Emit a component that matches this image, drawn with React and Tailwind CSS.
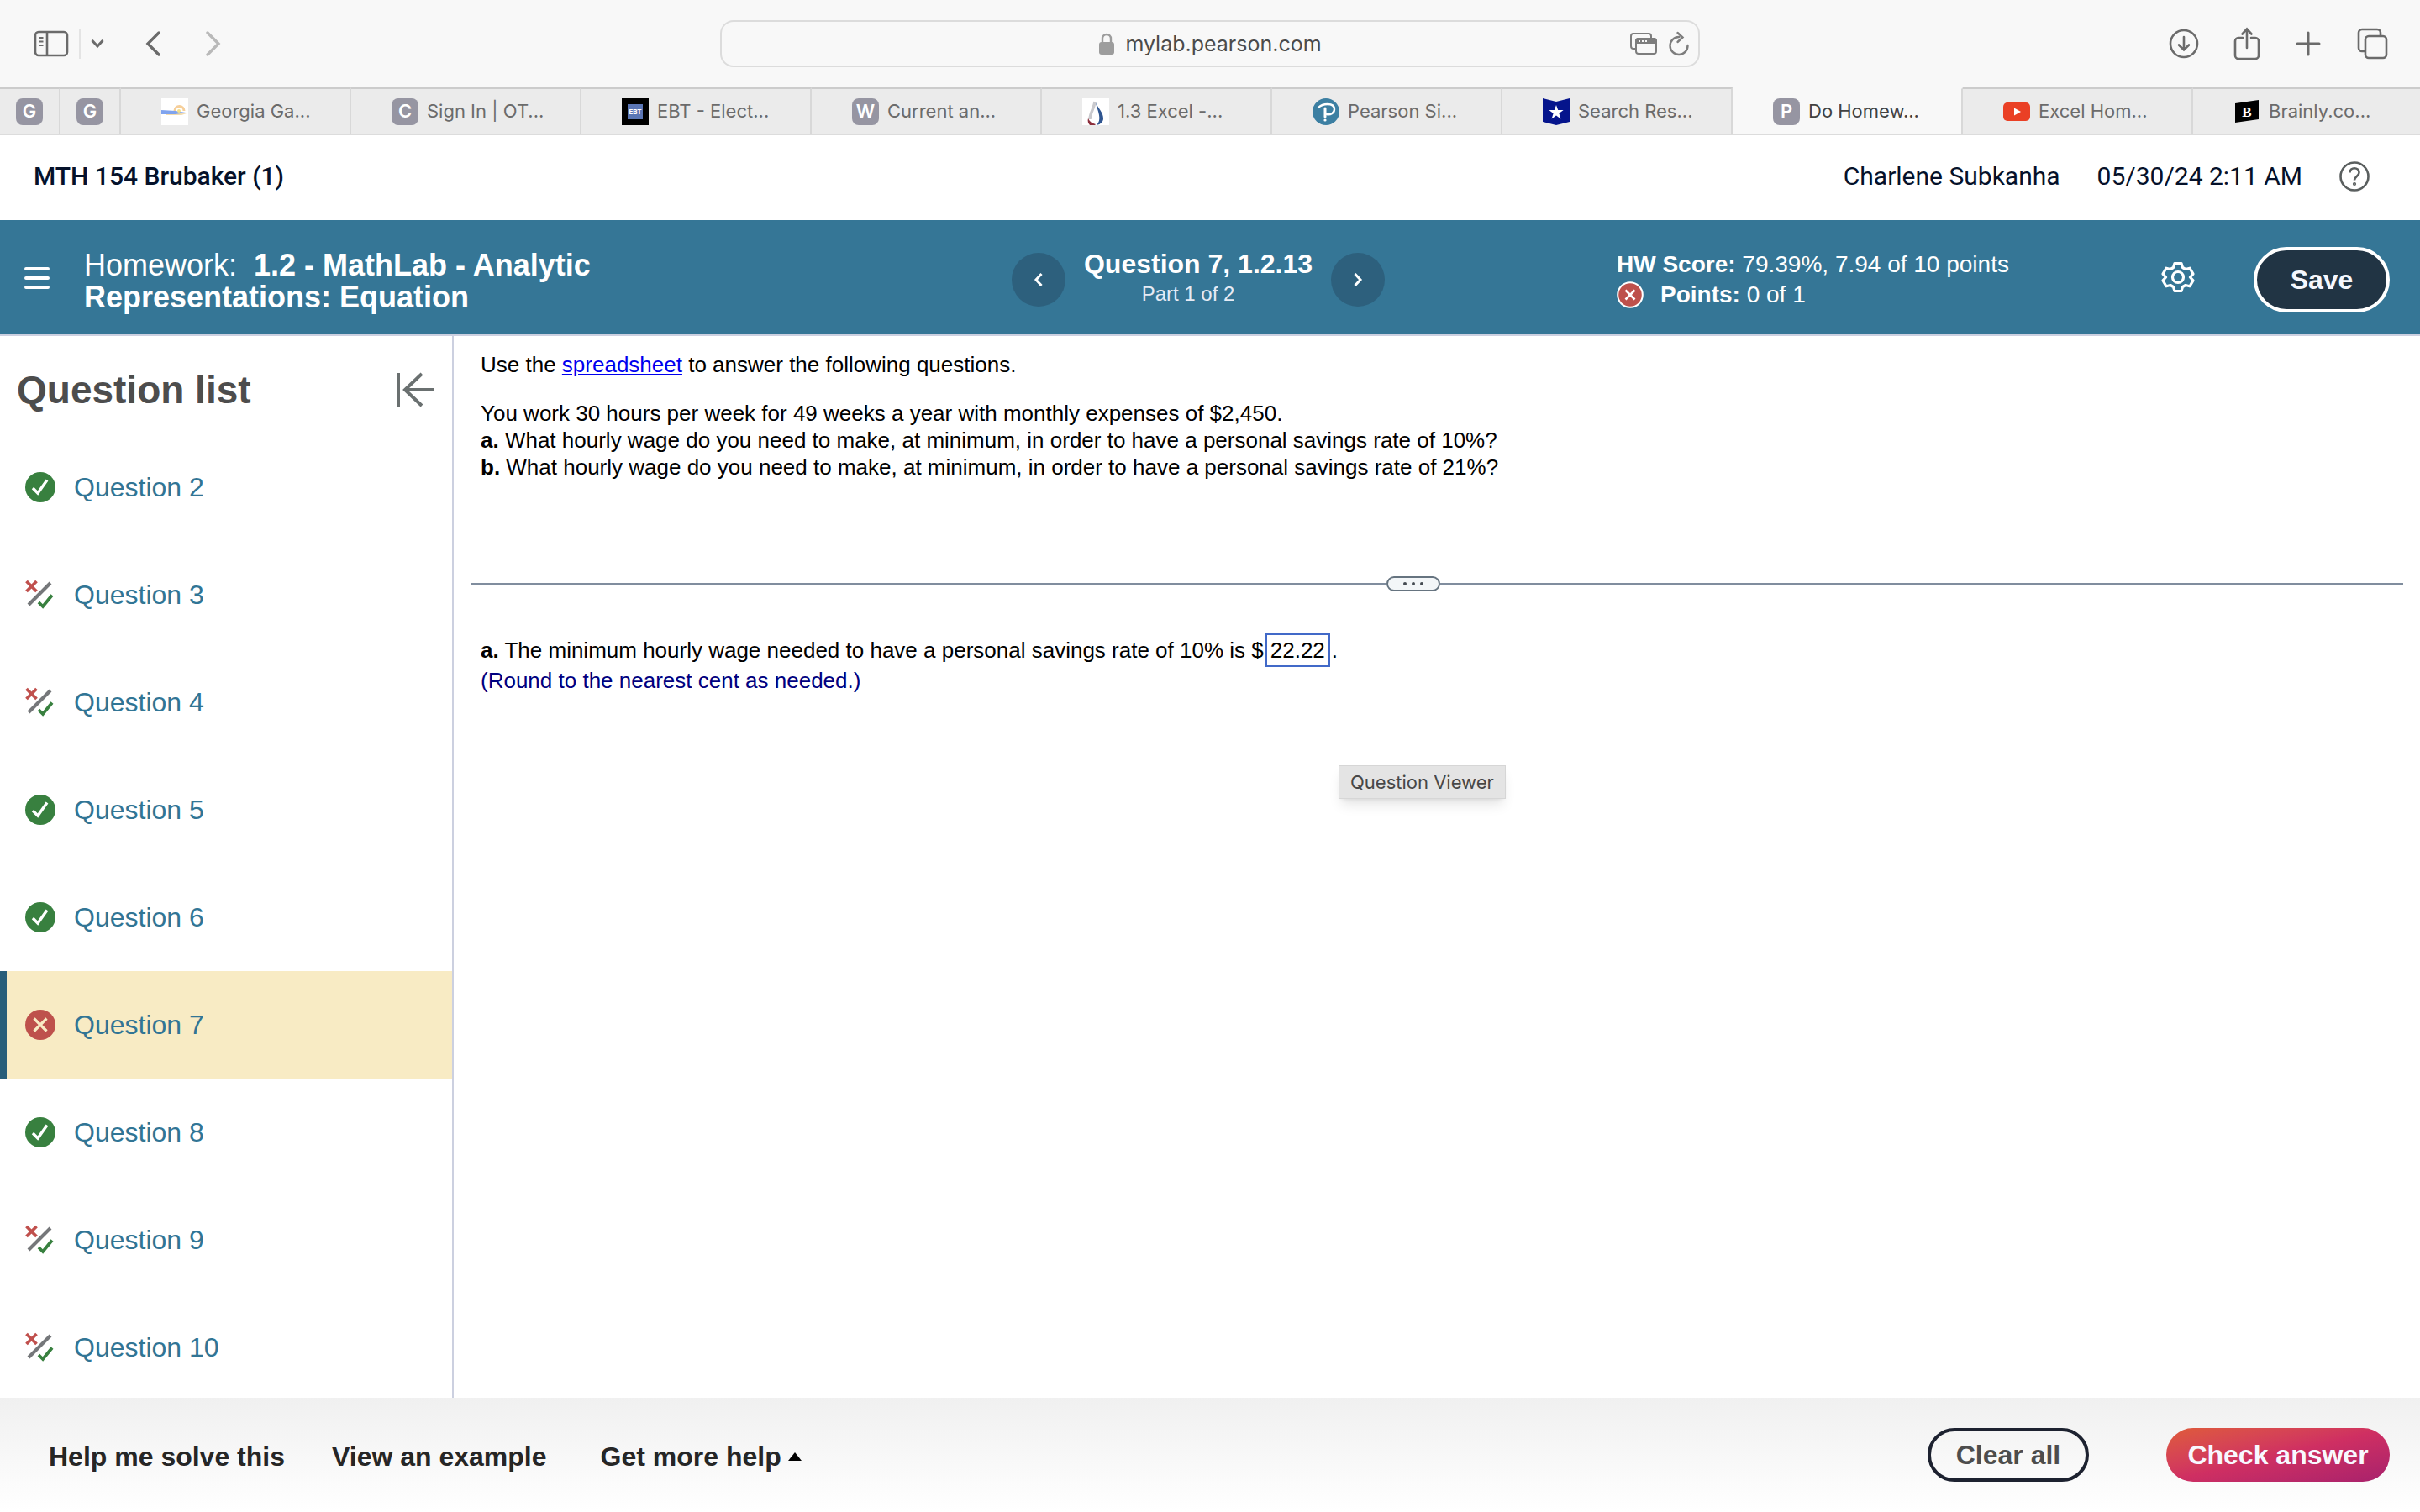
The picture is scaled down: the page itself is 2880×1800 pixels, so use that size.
import React, { useState } from "react";

const questions = [
  { number: 2, status: "correct" },
  { number: 3, status: "partial" },
  { number: 4, status: "partial" },
  { number: 5, status: "correct" },
  { number: 6, status: "correct" },
  { number: 7, status: "incorrect" },
  { number: 8, status: "correct" },
  { number: 9, status: "partial" },
  { number: 10, status: "partial" },
];

const LetterIcon = ({ letter }) => (
  <span className="flex h-8 w-8 shrink-0 items-center justify-center rounded-lg bg-[#9695a2] text-[22px] font-semibold text-white">
    {letter}
  </span>
);

const GeorgiaIcon = () => (
  <svg viewBox="0 0 32 32" className="h-8 w-8 shrink-0">
    <rect width="32" height="32" fill="#fff" />
    <path d="M16 15a5 5 0 0 1 11 0" fill="none" stroke="#f6cf9a" strokeWidth="3" />
    <path d="M6 18h24l-6 2H6z" fill="#f3dcae" />
    <path d="M0 14l17 1 12 2-12 2H0z" fill="#7fa3ee" />
    <circle cx="21" cy="15" r="2" fill="#f2e08a" />
  </svg>
);

const EbtIcon = () => (
  <span className="flex h-8 w-8 shrink-0 items-center justify-center bg-black">
    <span className="flex h-[18px] w-[18px] items-center justify-center bg-[#5b76b5] text-[8px] font-bold text-white">
      EBT
    </span>
  </span>
);

const DropIcon = () => (
  <svg viewBox="0 0 32 32" className="h-8 w-8 shrink-0">
    <rect width="32" height="32" fill="#fff" />
    <path d="M15 4C14 12 9 18 9 25" fill="none" stroke="#c9c9cd" strokeWidth="3.500" />
    <path d="M16 5c3 7 9 12 9 19 0 4-3 7-8 8 3-3 4-7 3-12-1-6-3-9-4-15z" fill="#2f5590" />
    <path d="M7 24c2 4 5 6 9 7l-1 1H9c-2-2-3-5-2-8z" fill="#8c2f3c" />
  </svg>
);

const PearsonIcon = () => (
  <svg viewBox="0 0 32 32" className="h-8 w-8 shrink-0">
    <ellipse cx="16" cy="16" rx="16" ry="16" fill="#3c7fa2" />
    <path
      d="M7 11c3-3 7-4 11-4 5 0 8 2 8 6 0 5-5 7-9 6"
      fill="none"
      stroke="#fff"
      strokeWidth="2.4"
      strokeLinecap="round"
    />
    <path d="M15 12v10" stroke="#fff" strokeWidth="3" strokeLinecap="round" />
    <circle cx="15" cy="26" r="1.6" fill="#fff" />
  </svg>
);

const BadgeIcon = () => (
  <svg viewBox="0 0 32 32" className="h-8 w-8 shrink-0">
    <path d="M0 0l16 4L32 0v28l-16 4-16-4z" fill="#05148c" />
    <path d="M16 8l2.200 6h6.400l-5.200 4 2 6.400L16 20.600 10.600 24.400l2-6.400-5.200-4h6.400z" fill="#fff" />
  </svg>
);

const VideoIcon = () => (
  <svg viewBox="0 0 32 32" className="h-8 w-8 shrink-0">
    <rect y="5" width="32" height="22" rx="5" fill="#ea4025" />
    <path d="M13 11.500v9l8-4.500z" fill="#fff" />
  </svg>
);

const BrainlyIcon = () => (
  <svg viewBox="0 0 32 32" className="h-8 w-8 shrink-0">
    <path d="M2 6l28-4v23L2 29z" fill="#000" />
    <text x="16" y="22" textAnchor="middle" fontSize="17" fontWeight="700" fill="#fff" fontFamily="Liberation Serif, serif">
      B
    </text>
  </svg>
);

const tabs = [
  { title: "Georgia Ga...", icon: <GeorgiaIcon /> },
  { title: "Sign In | OT...", icon: <LetterIcon letter="C" /> },
  { title: "EBT - Elect...", icon: <EbtIcon /> },
  { title: "Current an...", icon: <LetterIcon letter="W" /> },
  { title: "1.3 Excel -...", icon: <DropIcon /> },
  { title: "Pearson Si...", icon: <PearsonIcon /> },
  { title: "Search Res...", icon: <BadgeIcon /> },
  { title: "Do Homew...", icon: <LetterIcon letter="P" />, active: true },
  { title: "Excel Hom...", icon: <VideoIcon /> },
  { title: "Brainly.co...", icon: <BrainlyIcon /> },
];

const StatusIcon = ({ status }) => {
  if (status === "correct") {
    return (
      <svg viewBox="0 0 36 36" className="h-9 w-9">
        <circle cx="18" cy="18" r="18" fill="#38803f" />
        <path d="M9 19l6 6L26 9.500" fill="none" stroke="#fff" strokeWidth="3.400" />
      </svg>
    );
  }
  if (status === "incorrect") {
    return (
      <svg viewBox="0 0 36 36" className="h-9 w-9">
        <circle cx="18" cy="18" r="18" fill="#be514c" />
        <path d="M10.500 10.500l15 15M25.500 10.500l-15 15" stroke="#f8ebc4" strokeWidth="3.200" />
      </svg>
    );
  }
  return (
    <svg viewBox="0 0 36 36" className="h-9 w-9" fill="none">
      <path d="M1.500 2l12 12M13.500 2l-12 12" stroke="#c0504d" strokeWidth="3.800" />
      <path d="M4 30L30 4" stroke="#75777a" strokeWidth="4" />
      <path d="M16 27l5 5L32 18.500" stroke="#38803f" strokeWidth="3.800" />
    </svg>
  );
};

const BrowserToolbar = () => (
  <div className="grid h-[104px] grid-cols-[1fr_40.5%_1fr] items-center bg-[#f8f8f8] text-[#6b6b6b]">
    <div className="flex items-center pl-10">
      <button aria-label="Sidebar">
        <svg viewBox="0 0 42 32" className="h-8 w-[42px]" fill="none" stroke="currentColor">
          <rect x="2" y="2" width="38" height="28" rx="4" strokeWidth="2.600" />
          <path d="M16 2v28" strokeWidth="2.600" />
          <path d="M6.500 9h5M6.500 13.500h5M6.500 18h5" strokeWidth="2" />
        </svg>
      </button>
      <span className="ml-3 h-9 w-0.5 bg-[#e4e4e4]" />
      <button aria-label="Tab groups" className="ml-3">
        <svg viewBox="0 0 16 12" className="h-3 w-4" fill="none" stroke="currentColor" strokeWidth="3">
          <path d="M1.500 2L8 9l6.500-7" />
        </svg>
      </button>
      <button aria-label="Back" className="ml-12">
        <svg viewBox="0 0 20 32" className="h-8 w-5" fill="none" stroke="currentColor" strokeWidth="3.400" strokeLinecap="round">
          <path d="M17 3L4 16l13 13" />
        </svg>
      </button>
      <button aria-label="Forward" className="ml-[52px] text-[#b9b9b9]">
        <svg viewBox="0 0 20 32" className="h-8 w-5" fill="none" stroke="currentColor" strokeWidth="3.400" strokeLinecap="round">
          <path d="M3 3l13 13L3 29" />
        </svg>
      </button>
    </div>

    <div className="grid h-14 grid-cols-[1fr_auto_1fr] items-center rounded-2xl border-2 border-[#dcdcdc]">
      <span />
      <div className="flex items-center gap-3">
        <svg viewBox="0 0 20 28" className="h-7 w-5">
          <path d="M5 13V8a5 5 0 0 1 10 0v5" fill="none" stroke="#9d9d9d" strokeWidth="2.400" />
          <rect x="1" y="12" width="18" height="15" rx="3" fill="#9d9d9d" />
        </svg>
        <span className="text-[25px] leading-8 text-[#4b4b4b]">mylab.pearson.com</span>
      </div>
      <div className="flex items-center justify-end gap-3 pr-2.5 text-[#7d7d7d]">
        <svg viewBox="0 0 34 28" className="h-7 w-[34px]" fill="none" stroke="currentColor" strokeWidth="2">
          <path d="M8 20H5a3 3 0 0 1-3-3V5a3 3 0 0 1 3-3h18a3 3 0 0 1 3 3v3" />
          <rect x="8" y="8" width="24" height="18" rx="3" />
          <path d="M8 13v-2a3 3 0 0 1 3-3h18a3 3 0 0 1 3 3v2z" fill="currentColor" />
          <path d="M11 11h2M15 11h2M19 11h2" stroke="#f8f8f8" />
        </svg>
        <button aria-label="Reload">
          <svg viewBox="0 0 26 30" className="h-[30px] w-[26px]" fill="none" stroke="currentColor" strokeWidth="2.400" strokeLinecap="round">
            <path d="M13.500 7A10.500 10.500 0 1 0 23.500 17" />
            <path d="M11.500 2l6 5.500-6 5.500" />
          </svg>
        </button>
      </div>
    </div>

    <div className="flex items-center justify-end gap-[41px] pr-[38px]">
      <button aria-label="Downloads">
        <svg viewBox="0 0 36 36" className="h-9 w-9" fill="none" stroke="currentColor" strokeWidth="2.600" strokeLinecap="round">
          <circle cx="18" cy="18" r="16" />
          <path d="M18 10v15M12 19.500l6 6 6-6" />
        </svg>
      </button>
      <button aria-label="Share">
        <svg viewBox="0 0 32 40" className="h-10 w-8" fill="none" stroke="currentColor" strokeWidth="2.600" strokeLinecap="round">
          <path d="M11 13H6a4 4 0 0 0-4 4v17a4 4 0 0 0 4 4h20a4 4 0 0 0 4-4V17a4 4 0 0 0-4-4h-5" />
          <path d="M16 25V3M10.500 8.500L16 2.500l5.500 6" />
        </svg>
      </button>
      <button aria-label="New tab">
        <svg viewBox="0 0 32 32" className="h-8 w-8" fill="none" stroke="currentColor" strokeWidth="3" strokeLinecap="round">
          <path d="M16 3v26M3 16h26" />
        </svg>
      </button>
      <button aria-label="Tab overview">
        <svg viewBox="0 0 38 38" className="h-[38px] w-[38px]" fill="none" stroke="currentColor" strokeWidth="2.600">
          <path d="M10 28H7a4 4 0 0 1-4-4V6a4 4 0 0 1 4-4h18a4 4 0 0 1 4 4v3" />
          <rect x="11" y="10" width="25" height="26" rx="4" />
        </svg>
      </button>
    </div>
  </div>
);

const TabBar = () => (
  <div className="-mr-1 flex h-[57px] border-b-2 border-[#dcdcdc] bg-[#ebebeb] text-[22px] text-[#6b6b6b]">
    {[1, 2].map((pin) => (
      <div
        key={pin}
        className="flex w-[72px] items-center justify-center border-t-2 border-r-2 border-t-[#cccccc] border-r-[#d8d8d8]"
      >
        <LetterIcon letter="G" />
      </div>
    ))}
    {tabs.map((tab) => (
      <div
        key={tab.title}
        className={
          tab.active
            ? "flex min-w-0 flex-1 items-center gap-2.5 border-t-2 border-r-2 border-t-[#f8f8f8] border-r-[#d8d8d8] bg-[#f8f8f8] pl-12 text-[#414141]"
            : "flex min-w-0 flex-1 items-center gap-2.5 border-t-2 border-r-2 border-t-[#cccccc] border-r-[#d8d8d8] pl-12"
        }
      >
        {tab.icon}
        <span className="whitespace-nowrap">{tab.title}</span>
      </div>
    ))}
  </div>
);

const CourseHeader = () => (
  <header className="flex h-[101px] items-center justify-between bg-white pr-[60px] pb-1 pl-10 font-['Roboto',sans-serif] text-[30px] text-[#05112a]">
    <h1 className="font-medium">MTH 154 Brubaker (1)</h1>
    <div className="flex items-center gap-11">
      <span>Charlene Subkanha</span>
      <span>05/30/24 2:11 AM</span>
      <button aria-label="Help">
        <svg viewBox="0 0 36 36" className="h-9 w-9" fill="none" stroke="#5a5f5f" strokeWidth="2.600">
          <circle cx="18" cy="18" r="16.500" />
          <path d="M12.500 13.500c0-7 11-7 11 0 0 4-5.500 4.500-5.500 9" />
          <circle cx="18" cy="27" r="0.800" />
        </svg>
      </button>
    </div>
  </header>
);

const AssignmentBar = () => (
  <div className="grid h-[138px] grid-cols-[1204fr_444fr_1232fr] items-center border-b-2 border-[#ccd0e0] bg-[#357696] pt-1.5 text-white">
    <div className="flex items-center gap-10 pl-7">
      <button aria-label="Menu" className="pb-1">
        <svg viewBox="0 0 32 28" className="h-7 w-8" stroke="currentColor" strokeWidth="4" strokeLinecap="round">
          <path d="M3 3h26M3 14h26M3 25h26" />
        </svg>
      </button>
      <h2 className="max-w-[660px] pt-1 text-[36px] leading-[38px] font-bold">
        <span className="font-normal">Homework:</span>&nbsp; 1.2 - MathLab - Analytic Representations: Equation
      </h2>
    </div>

    <div className="flex items-center justify-between">
      <button aria-label="Previous question" className="flex h-16 w-16 items-center justify-center rounded-full bg-[#2d607d]">
        <svg viewBox="0 0 12 18" className="h-[18px] w-3" fill="none" stroke="currentColor" strokeWidth="3">
          <path d="M9.500 2L3 9l6.500 7" />
        </svg>
      </button>
      <div className="pb-1 text-center">
        <p className="text-[32px] leading-9 font-bold">Question 7, 1.2.13</p>
        <p className="pt-0.5 pr-6 text-2xl text-[#e6ebf5]">Part 1 of 2</p>
      </div>
      <button aria-label="Next question" className="flex h-16 w-16 items-center justify-center rounded-full bg-[#2d607d]">
        <svg viewBox="0 0 12 18" className="h-[18px] w-3" fill="none" stroke="currentColor" strokeWidth="3">
          <path d="M2.500 2L9 9l-6.500 7" />
        </svg>
      </button>
    </div>

    <div className="flex items-center pr-9">
      <div className="flex-1 pl-[276px] text-[28px] leading-9 whitespace-nowrap">
        <p>
          <b>HW Score:</b> 79.39%, 7.94 of 10 points
        </p>
        <p className="flex items-center">
          <svg viewBox="0 0 32 32" className="mr-5 h-8 w-8">
            <circle cx="16" cy="16" r="14.800" fill="#be514c" stroke="#fff" strokeWidth="2" />
            <path d="M10.500 10.500l11 11M21.500 10.500l-11 11" stroke="#fff" strokeWidth="2.600" />
          </svg>
          <span>
            <b>Points:</b> 0 of 1
          </span>
        </p>
      </div>
      <button aria-label="Settings" className="mr-[70px] pb-1.5">
        <svg viewBox="0 0 40 40" className="h-10 w-10" fill="none" stroke="currentColor" strokeWidth="3.200" strokeLinejoin="round">
          <path d="M16 3.500h8l1.500 5 3.500 2 5-1.300 4 6.900-3.600 3.900 3.600 3.900-4 6.900-5-1.300-3.500 2-1.500 5h-8l-1.500-5-3.500-2-5 1.300-4-6.900L5.600 20 2 16.100l4-6.900 5 1.300 3.500-2z" />
          <circle cx="20" cy="20" r="6.500" />
        </svg>
      </button>
      <button className="h-[78px] w-[162px] rounded-full border-4 border-white bg-[#213444] text-[32px] font-bold text-[#f5f7fd]">
        Save
      </button>
    </div>
  </div>
);

const QuestionList = () => (
  <aside className="w-[540px] shrink-0 border-r-2 border-[#ccd0e0]">
    <div className="flex h-[116px] items-center justify-between pt-3 pr-5 pl-5">
      <h2 className="text-[46px] leading-none font-bold text-[#4d4d4d]">Question list</h2>
      <button aria-label="Collapse question list">
        <svg viewBox="0 0 48 44" className="h-11 w-12" fill="none" stroke="#6a7070" strokeWidth="4">
          <path d="M4 2v40M46 22H12M32 3L12 22l20 19" />
        </svg>
      </button>
    </div>
    <nav>
      {questions.map((question) => (
        <a
          key={question.number}
          href="#"
          className={
            question.number === 7
              ? "flex h-32 items-center gap-[22px] border-l-8 border-[#285e7a] bg-[#f8ebc4] pl-[22px] text-[32px] text-[#317595]"
              : "flex h-32 items-center gap-[22px] border-l-8 border-transparent pl-[22px] text-[32px] text-[#317595]"
          }
        >
          <StatusIcon status={question.status} />
          Question {question.number}
        </a>
      ))}
    </nav>
  </aside>
);

const QuestionViewer = () => {
  const [answer, setAnswer] = useState("22.22");

  return (
    <main className="relative flex-1 pr-5 pl-5 text-[26px] leading-8 text-black">
      <div className="h-[286px] pt-[18px] pl-3">
        <p>
          Use the{" "}
          <a href="#" className="text-[#0000ee] underline">
            spreadsheet
          </a>{" "}
          to answer the following questions.
        </p>
        <p className="mt-[26px]">You work 30 hours per week for 49 weeks a year with monthly expenses of $2,450.</p>
        <p>
          <b>a.</b> What hourly wage do you need to make, at minimum, in order to have a personal savings rate of 10%?
        </p>
        <p>
          <b>b.</b> What hourly wage do you need to make, at minimum, in order to have a personal savings rate of 21%?
        </p>
      </div>

      {/* Resize handle between the question and the answer */}
      <div className="flex items-center">
        <span className="h-0.5 flex-[1090] bg-[#808d9e]" />
        <button
          aria-label="Resize panes"
          className="flex h-[18px] w-16 items-center justify-center gap-1.5 rounded-full border-2 border-[#667480] bg-[#f3f6f8]"
        >
          <span className="h-1 w-1 rounded-full bg-[#454b52]" />
          <span className="h-1 w-1 rounded-full bg-[#454b52]" />
          <span className="h-1 w-1 rounded-full bg-[#454b52]" />
        </button>
        <span className="h-0.5 flex-[1146] bg-[#808d9e]" />
      </div>

      <div className="pt-[50px] pl-3">
        <div className="flex h-10 items-center">
          <label htmlFor="answer">
            <b>a.</b> The minimum hourly wage needed to have a personal savings rate of 10% is $
          </label>
          <input
            id="answer"
            type="text"
            value={answer}
            onChange={(e) => setAnswer(e.target.value)}
            className="mx-0.5 h-10 w-[77px] border-2 border-[#4169c8] bg-white px-1 outline-none"
          />
          .
        </div>
        <p className="text-[#000080]">(Round to the nearest cent as needed.)</p>
      </div>

      <div
        role="tooltip"
        className="absolute top-[511px] left-[1053px] border border-[#d6d6d6] bg-[#e4e4e4] px-[13px] py-[3px] font-['Inter',sans-serif] text-[22px] text-[#474747] shadow-lg"
      >
        Question Viewer
      </div>
    </main>
  );
};

const Footer = () => (
  <footer className="flex h-[136px] shrink-0 items-center justify-between bg-linear-to-b from-[#f0f0f0] to-white pr-9 pl-[58px] text-[32px] font-bold text-[#262626]">
    <div className="flex gap-14 pt-1">
      <button>Help me solve this</button>
      <button>View an example</button>
      <button className="flex items-center gap-2 pl-2">
        Get more help
        <svg viewBox="0 0 16 10" className="h-2.5 w-4">
          <path d="M0 10L8 0l8 10z" fill="#000" />
        </svg>
      </button>
    </div>
    <div className="flex gap-[92px]">
      <button className="h-16 w-48 rounded-full border-4 border-[#1d2230] text-[#4d4d4d]">Clear all</button>
      <button className="h-16 w-[266px] rounded-full bg-linear-to-br from-[#df5b38] via-[#cf2f62] to-[#a8216c] text-[#f8f8ff]">
        Check answer
      </button>
    </div>
  </footer>
);

const App = () => {
  return (
    <div className="flex h-screen flex-col overflow-hidden bg-white font-['Liberation_Sans',Arial,sans-serif]">
      <div className="shrink-0 font-['Inter',sans-serif]">
        <BrowserToolbar />
        <TabBar />
      </div>
      <div className="shrink-0">
        <CourseHeader />
        <AssignmentBar />
      </div>
      <div className="flex min-h-0 flex-1 overflow-hidden">
        <QuestionList />
        <QuestionViewer />
      </div>
      <Footer />
    </div>
  );
};

export default App;
